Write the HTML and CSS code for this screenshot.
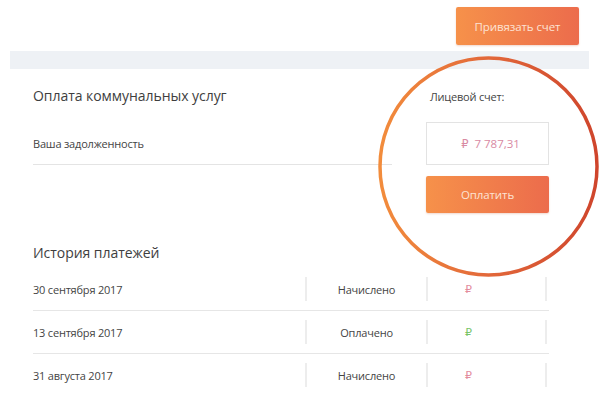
FILE: index.html
```html
<!DOCTYPE html>
<html lang="ru">
<head>
<meta charset="utf-8">
<link rel="stylesheet" href="styles.css">
</head>
<body>
<div class="page">
  <div class="topbar">
    <button class="btn btn-link">Привязать счет</button>
  </div>
  <div class="band"></div>
  <div class="main">
    <section class="pay">
      <h2 class="title">Оплата коммунальных услуг</h2>
      <div class="acc-label">Лицевой счет:</div>
      <div class="debt-row">Ваша задолженность</div>
      <div class="amount-box"><span class="rub">₽</span>&nbsp; 7 787,31</div>
      <div class="pay-empty"></div>
      <button class="btn btn-pay">Оплатить</button>
    </section>
    <section class="history">
      <h2 class="title history-title">История платежей</h2>
      <div class="hrow">
        <div class="cell date">30 сентября 2017</div>
        <div class="cell status">Начислено</div>
        <div class="cell sum sum-due"><span class="rub">₽</span></div>
      </div>
      <div class="hrow">
        <div class="cell date">13 сентября 2017</div>
        <div class="cell status">Оплачено</div>
        <div class="cell sum sum-paid"><span class="rub">₽</span></div>
      </div>
      <div class="hrow">
        <div class="cell date">31 августа 2017</div>
        <div class="cell status">Начислено</div>
        <div class="cell sum sum-due"><span class="rub">₽</span></div>
      </div>
    </section>
  </div>
  <svg class="ring" width="221" height="221" viewBox="0 0 221 221" aria-hidden="true">
    <defs>
      <linearGradient id="ringGrad" x1="0" y1="0" x2="1" y2="0">
        <stop offset="0" stop-color="#f28c3c"/>
        <stop offset="0.5" stop-color="#e2683a"/>
        <stop offset="1" stop-color="#cf452c"/>
      </linearGradient>
    </defs>
    <circle cx="110.5" cy="110.5" r="108.5" fill="none" stroke="url(#ringGrad)" stroke-width="3.5"/>
  </svg>
</div>
</body>
</html>
```

FILE: styles.css
```css
* { box-sizing: border-box; }

html, body {
  margin: 0;
  padding: 0;
  background: #ffffff;
}

body {
  font-family: "Open Sans", "DejaVu Sans", sans-serif;
  color: #444444;
}

.page {
  position: relative;
  width: 600px;
  height: 396px;
  overflow: hidden;
}

.topbar {
  display: flex;
  justify-content: flex-end;
  padding: 7px 21px 0 0;
  height: 51px;
}

.btn {
  border: 0;
  border-radius: 2px;
  font-family: "Open Sans", "DejaVu Sans", sans-serif;
  font-size: 11.5px;
  letter-spacing: -0.1px;
  color: #fde3d4;
  background: linear-gradient(90deg, #f6914a 0%, #ec6c4c 100%);
  padding: 0;
  cursor: pointer;
}

.btn-link {
  width: 123px;
  height: 38px;
  box-shadow: 0 1px 2px rgba(200, 100, 60, 0.25);
}

.band {
  height: 18px;
  margin: 0 11px 0 10px;
  background: #eef1f5;
}

.main {
  padding: 17px 0 0 33px;
}

.title {
  margin: 0;
  font-size: 14px;
  font-weight: 400;
  line-height: 20px;
  color: #3e3e3e;
  letter-spacing: -0.05px;
}

.pay {
  display: grid;
  grid-template-columns: 359px 123px;
  grid-template-rows: 36px 43px auto;
  column-gap: 34px;
}

.acc-label {
  font-size: 11px;
  letter-spacing: -0.2px;
  line-height: 20px;
  padding: 1px 0 0 4px;
}

.debt-row {
  display: flex;
  align-items: center;
  font-size: 11px;
  letter-spacing: -0.2px;
  border-bottom: 1px solid #e4e4e4;
  padding-top: 1px;
}

.amount-box {
  display: flex;
  align-items: center;
  justify-content: center;
  border: 1px solid #e3e3e3;
  font-size: 11.5px;
  color: #d98aa3;
  padding-left: 6px;
}

.rub {
  font-family: "DejaVu Sans", sans-serif;
  font-size: 1em;
}

.btn-pay {
  margin-top: 11px;
  width: 123px;
  height: 37px;
  box-shadow: 0 1px 2px rgba(200, 100, 60, 0.25);
}

.history {
  padding-top: 30px;
  width: 516px;
}

.history-title {
  margin-bottom: 5px;
}

.hrow {
  display: grid;
  grid-template-columns: 272px 121px 121px 2px;
  align-items: center;
  height: 43px;
  border-bottom: 1px solid #e6e6e6;
}

.cell {
  font-size: 11px;
  letter-spacing: -0.2px;
}

.status,
.sum {
  height: 24px;
  display: flex;
  align-items: center;
  border-left: 2px solid #ededed;
}

.status {
  justify-content: center;
}

.sum {
  border-right: 2px solid #ededed;
  padding-left: 37px;
}

.sum-due { color: #e38c9d; }
.sum-paid { color: #79c468; }

.ring {
  position: absolute;
  left: 378px;
  top: 56px;
}
```
